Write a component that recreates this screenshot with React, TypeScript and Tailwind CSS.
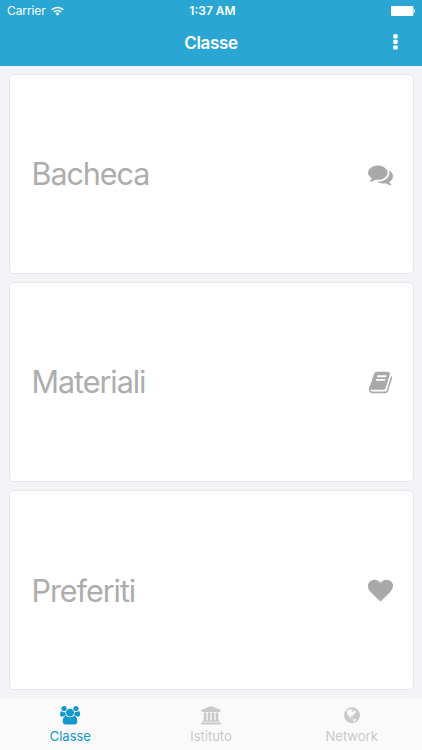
interface Glyph {
  viewBox: string;
  d: string;
}

const comments: Glyph = {
  viewBox: '0 0 1792 1792',
  d: 'M1408 768q0 139-94 257t-256.5 186.5-353.5 68.5q-86 0-176-16-124 88-278 128-36 9-86 16h-3q-11 0-20.5-8t-11.5-21q-1-3-1-6.5t.5-6.5 2-6l2.5-5 3.5-5.5 4-5 4.5-5 4-4.5q5-6 23-25t26-29.5 22.5-29 25-38.5 20.5-44q-124-72-195-177t-71-224q0-139 94-257t256.5-186.5 353.5-68.5 353.5 68.5 256.5 186.5 94 257zm384 256q0 120-71 224.5t-195 176.5q10 24 20.5 44t25 38.5 22.5 29 26 29.5 23 25q1 1 4 4.5t4.5 5 4 5 3.5 5.5l2.5 5 2 6 .5 6.5-1 6.5q-3 14-13 22t-22 7q-50-7-86-16-154-40-278-128-90 16-176 16-271 0-472-132 58 4 88 4 161 0 309-45t264-129q125-92 192-212t67-254q0-77-23-152 129 71 204 178t75 230z',
};

const book: Glyph = {
  viewBox: '0 0 1792 1792',
  d: 'M1703 478q40 57 18 129l-275 906q-19 64-76.5 107.5t-122.5 43.5h-923q-77 0-148.5-53.5t-99.5-131.5q-24-67-2-127 0-4 3-27t4-37q1-8-3-21.5t-3-19.5q2-11 8-21t16.5-23.5 16.5-23.5q23-38 45-91.5t30-91.5q3-10 .5-30t-.5-28q3-11 17-28t17-23q21-36 42-92t25-90q1-9-2.5-32t.5-28q4-13 22-30.5t22-22.5q19-26 42.5-84.5t27.5-96.5q1-8-3-25.5t-2-26.5q2-8 9-18t18-23 17-21q8-12 16.5-30.5t15-35 16-36 19.5-32 26.5-23.5 36-11.5 47.5 5.5l-1 3q38-9 51-9h761q74 0 114 56t18 130l-274 906q-36 119-71.5 153.5t-128.5 34.5h-869q-27 0-38 15-11 16-1 43 24 70 144 70h923q29 0 56-15.5t35-41.5l300-987q7-22 5-57 38 15 59 43zm-1064 2q-4 13 2 22.5t20 9.5h608q13 0 25.5-9.5t16.5-22.5l21-64q4-13-2-22.5t-20-9.5h-608q-13 0-25.5 9.5t-16.5 22.5zm-83 256q-4 13 2 22.5t20 9.5h608q13 0 25.5-9.5t16.5-22.5l21-64q4-13-2-22.5t-20-9.5h-608q-13 0-25.5 9.5t-16.5 22.5z',
};

const heart: Glyph = {
  viewBox: '0 0 1792 1792',
  d: 'M896 1664q-26 0-44-18l-624-602q-10-8-27.5-26t-55.5-65.5-68-97.5-53.5-121-23.5-138q0-220 127-344t351-124q62 0 126.5 21.5t120 58 95.5 68.5 76 68q36-36 76-68t95.5-68.5 120-58 126.5-21.5q224 0 351 124t127 344q0 221-229 450l-623 600q-18 18-44 18z',
};

const users: Glyph = {
  viewBox: '64 0 1920 1792',
  d: 'M657 896q-162 5-265 128h-134q-82 0-138-40.5t-56-118.5q0-353 124-353 6 0 43.5 21t97.5 42.5 119 21.5q67 0 133-23-5 37-5 66 0 159 90 283zm1071 637q0 120-73 189.5t-194 69.5h-874q-121 0-194-69.5t-73-189.5q0-53 3.5-103.5t14-109 26.5-108.5 43-97.5 62-81 85.5-53.5 111.5-20q10 0 43 21.5t73 48 107 48 135 21.5 135-21.5 107-48 73-48 43-21.5q61 0 111.5 20t85.5 53.5 62 81 43 97.5 26.5 108.5 14 109 3.5 103.5zm-1024-1277q0 106-75 181t-181 75-181-75-75-181 75-181 181-75 181 75 75 181zm704 384q0 159-112.5 271.5t-271.5 112.5-271.5-112.5-112.5-271.5 112.5-271.5 271.5-112.5 271.5 112.5 112.5 271.5zm576 225q0 78-56 118.5t-138 40.5h-134q-103-123-265-128 90-124 90-283 0-29-5-66 66 23 133 23 59 0 119-21.5t97.5-42.5 43.5-21q124 0 124 353zm-128-609q0 106-75 181t-181 75-181-75-75-181 75-181 181-75 181 75 75 181z',
};

const university: Glyph = {
  viewBox: '32 0 1920 1792',
  d: 'M992 0l960 384v128h-128q0 26-20.5 45t-48.5 19h-1526q-28 0-48.5-19t-20.5-45h-128v-128zm-704 640h256v768h128v-768h256v768h128v-768h256v768h128v-768h256v768h59q28 0 48.5 19t20.5 45v64h-1664v-64q0-26 20.5-45t48.5-19h59v-768zm1595 960q28 0 48.5 19t20.5 45v128h-1920v-128q0-26 20.5-45t48.5-19h1782z',
};

const globe: Glyph = {
  viewBox: '-64 0 1920 1792',
  d: 'M896 128q209 0 385.5 103t279.5 279.5 103 385.5-103 385.5-279.5 279.5-385.5 103-385.5-103-279.5-279.5-103-385.5 103-385.5 279.5-279.5 385.5-103zm274 521q-2 1-9.5 9.5t-13.5 9.5q2 0 4.5-5t5-11 3.5-7q6-7 22-15 14-6 52-12 34-8 51 11-2-2 9.5-13t14.5-12q3-2 15-4.5t15-7.5l2-22q-12 1-17.5-7t-6.5-21q0 2-6 8 0-7-4.5-8t-11.5 1-9 1q-10-3-15-7.5t-8-16.5-4-15q-2-5-9.5-11t-9.5-10q-1-2-2.5-5.5t-3-6.5-4-5.5-5.5-2.5-7 5-7.5 10-4.5 5q-3-2-6-1.5t-4.5 1-4.5 3-5 3.5q-3 2-8.5 3t-8.5 2q15-5-1-11-10-4-16-3 9-4 7.5-12t-8.5-14h5q-1-4-8.5-8.5t-17.5-8.5-13-6q-8-5-34-9.5t-33-.5q-5 6-4.5 10.5t4 14 3.5 12.5q1 6-5.5 13t-6.5 12q0 7 14 15.5t10 21.5q-3 8-16 16t-16 12q-5 8-1.5 18.5t10.5 16.5q2 2 1.5 4t-3.5 4.5-5.5 4-6.5 3.5l-3 2q-11 5-20.5-6t-13.5-26q-7-25-16-30-23-8-29 1-5-13-41-26-25-9-58-4 6-1 0-15-7-15-19-12 3-6 4-17.5t1-13.5q3-13 12-23 1-1 7-8.5t9.5-13.5.5-6q35 4 50-11 5-5 11.5-17t10.5-17q9-6 14-5.5t14.5 5.5 14.5 5q14 1 15.5-11t-7.5-20q12 1 3-17-4-7-8-9-12-4-27 5-8 4 2 8-1-1-9.5 10.5t-16.5 17.5-16-5q-1-1-5.5-13.5t-9.5-13.5q-8 0-16 15 3-8-11-15t-24-8q19-12-8-27-7-4-20.5-5t-19.5 4q-5 7-5.5 11.5t5 8 10.5 5.5 11.5 4 8.5 3q14 10 8 14-2 1-8.5 3.5t-11.5 4.5-6 4q-3 4 0 14t-2 14q-5-5-9-17.5t-7-16.5q7 9-25 6l-10-1q-4 0-16 2t-20.5 1-13.5-8q-4-8 0-20 1-4 4-2-4-3-11-9.5t-10-8.5q-46 15-94 41 6 1 12-1 5-2 13-6.5t10-5.5q34-14 42-7l5-5q14 16 20 25-7-4-30-1-20 6-22 12 7 12 5 18-4-3-11.5-10t-14.5-11-15-5q-16 0-22 1-146 80-235 222 7 7 12 8 4 1 5 9t2.5 11 11.5-3q9 8 3 19 1-1 44 27 19 17 21 21 3 11-10 18-1-2-9-9t-9-4q-3 5 .5 18.5t10.5 12.5q-7 0-9.5 16t-2.5 35.5-1 23.5l2 1q-3 12 5.5 34.5t21.5 19.5q-13 3 20 43 6 8 8 9 3 2 12 7.5t15 10 10 10.5q4 5 10 22.5t14 23.5q-2 6 9.5 20t10.5 23q-1 0-2.5 1t-2.5 1q3 7 15.5 14t15.5 13q1 3 2 10t3 11 8 2q2-20-24-62-15-25-17-29-3-5-5.5-15.5t-4.5-14.5q2 0 6 1.5t8.5 3.5 7.5 4 2 3q-3 7 2 17.5t12 18.5 17 19 12 13q6 6 14 19.5t0 13.5q9 0 20 10.5t17 19.5q5 8 8 26t5 24q2 7 8.5 13.5t12.5 9.5l16 8 13 7q5 2 18.5 10.5t21.5 11.5q10 4 16 4t14.5-2.5 13.5-3.5q15-2 29 15t21 21q36 19 55 11-2 1 .5 7.5t8 15.5 9 14.5 5.5 8.5q5 6 18 15t18 15q6-4 7-9-3 8 7 20t18 10q14-3 14-32-31 15-49-18 0-1-2.5-5.5t-4-8.5-2.5-8.5 0-7.5 5-3q9 0 10-3.5t-2-12.5-4-13q-1-8-11-20t-12-15q-5 9-16 8t-16-9q0 1-1.5 5.5t-1.5 6.5q-13 0-15-1 1-3 2.5-17.5t3.5-22.5q1-4 5.5-12t7.5-14.5 4-12.5-4.5-9.5-17.5-2.5q-19 1-26 20-1 3-3 10.5t-5 11.5-9 7q-7 3-24 2t-24-5q-13-8-22.5-29t-9.5-37q0-10 2.5-26.5t3-25-5.5-24.5q3-2 9-9.5t10-10.5q2-1 4.5-1.5t4.5 0 4-1.5 3-6q-1-1-4-3-3-3-4-3 7 3 28.5-1.5t27.5 1.5q15 11 22-2 0-1-2.5-9.5t-.5-13.5q5 27 29 9 3 3 15.5 5t17.5 5q3 2 7 5.5t5.5 4.5 5-.5 8.5-6.5q10 14 12 24 11 40 19 44 7 3 11 2t4.5-9.5 0-14-1.5-12.5l-1-8v-18l-1-8q-15-3-18.5-12t1.5-18.5 15-18.5q1-1 8-3.5t15.5-6.5 12.5-8q21-19 15-35 7 0 11-9-1 0-5-3t-7.5-5-4.5-2q9-5 2-16 5-3 7.5-11t7.5-10q9 12 21 2 8-8 1-16 5-7 20.5-10.5t18.5-9.5q7 2 8-2t1-12 3-12q4-5 15-9t13-5l17-11q3-4 0-4 18 2 31-11 10-11-6-20 3-6-3-9.5t-15-5.5q3-1 11.5-.5t10.5-1.5q15-10-7-16-17-5-43 12zm-163 877q206-36 351-189-3-3-12.5-4.5t-12.5-3.5q-18-7-24-8 1-7-2.5-13t-8-9-12.5-8-11-7q-2-2-7-6t-7-5.5-7.5-4.5-8.5-2-10 1l-3 1q-3 1-5.5 2.5t-5.5 3-4 3 0 2.5q-21-17-36-22-5-1-11-5.5t-10.5-7-10-1.5-11.5 7q-5 5-6 15t-2 13q-7-5 0-17.5t2-18.5q-3-6-10.5-4.5t-12 4.5-11.5 8.5-9 6.5-8.5 5.5-8.5 7.5q-3 4-6 12t-5 11q-2-4-11.5-6.5t-9.5-5.5q2 10 4 35t5 38q7 31-12 48-27 25-29 40-4 22 12 26 0 7-8 20.5t-7 21.5q0 6 2 16z',
};

const cards = [
  { label: 'Bacheca', icon: comments },
  { label: 'Materiali', icon: book },
  { label: 'Preferiti', icon: heart },
];

const tabs = [
  { label: 'Classe', icon: users, active: true },
  { label: 'Istituto', icon: university, active: false },
  { label: 'Network', icon: globe, active: false },
];

function Icon({ glyph, className }: { glyph: Glyph; className: string }) {
  return (
    <svg viewBox={glyph.viewBox} className={className} fill="currentColor" aria-hidden="true">
      <path d={glyph.d} />
    </svg>
  );
}

function StatusBar() {
  return (
    <div className="grid h-[22px] grid-cols-3 items-center pr-[7px] pl-[7px] text-[12px] leading-none">
      <div className="flex items-center gap-[5px]">
        <span className="tracking-[-0.1px]">Carrier</span>
        <svg viewBox="0 0 13 10" className="mb-px h-[10px] w-[13px]" fill="none" stroke="currentColor" strokeWidth="1.5">
          <path d="M.7 3.8a8.2 8.2 0 0 1 11.6 0" />
          <path d="M2.8 6a5.2 5.2 0 0 1 7.4 0" />
          <path d="M6.5 9.7 4.4 7.6a3 3 0 0 1 4.2 0z" fill="currentColor" stroke="none" />
        </svg>
      </div>
      <span className="pl-[3px] text-center font-semibold">1:37 AM</span>
      <svg viewBox="0 0 24 10" className="h-[10px] w-[24px] justify-self-end" fill="currentColor">
        <rect width="22.4" height="10" rx="1" />
        <rect x="22.8" y="3.2" width="1.2" height="3.4" rx=".6" />
      </svg>
    </div>
  );
}

export default function App() {
  return (
    <div className="flex h-[750px] w-[422px] flex-col bg-[#f4f3f7] font-['Inter',sans-serif]">
      <header className="h-[66px] shrink-0 bg-[#29a6d3] text-white">
        <StatusBar />
        <div className="grid h-[43px] grid-cols-[1fr_auto_1fr] items-center pr-[24px] pl-[24px]">
          <h1 className="col-start-2 text-[17px] font-semibold tracking-[-0.35px]">Classe</h1>
          <button type="button" className="justify-self-end" aria-label="Menu">
            <svg viewBox="0 0 5 16" className="mt-[-3px] h-[16px] w-[5px]" fill="currentColor">
              <rect x=".3" y=".2" width="4.4" height="4.2" rx=".9" />
              <rect x=".3" y="5.8" width="4.4" height="4.2" rx=".9" />
              <rect x=".3" y="11.4" width="4.4" height="4.2" rx=".9" />
            </svg>
          </button>
        </div>
      </header>

      <main className="flex flex-1 flex-col gap-[8px] px-[8.5px] pt-[7.5px] pb-[8px]">
        {cards.map(({ label, icon }) => (
          <div
            key={label}
            className="flex flex-1 items-center justify-between rounded-[5px] border border-[#e6e5ea] bg-white pt-px pr-[20px] pl-[22px] text-[#adadad]"
          >
            <span className="text-[30.5px] tracking-[-1.05px]">{label}</span>
            <Icon glyph={icon} className="size-[25px] text-[#a9a9a9]" />
          </div>
        ))}
      </main>

      <nav className="grid h-[52px] shrink-0 grid-cols-3 bg-[#fafafa]">
        {tabs.map(({ label, icon, active }) => (
          <div
            key={label}
            className={`flex flex-col items-center pt-[8px] ${active ? 'text-[#1299cb]' : 'text-[#c9c9c9]'}`}
          >
            <Icon glyph={icon} className="h-[18.5px] w-[20px]" />
            <span className="mt-[3px] text-[13px] leading-[16px]">{label}</span>
          </div>
        ))}
      </nav>
    </div>
  );
}
